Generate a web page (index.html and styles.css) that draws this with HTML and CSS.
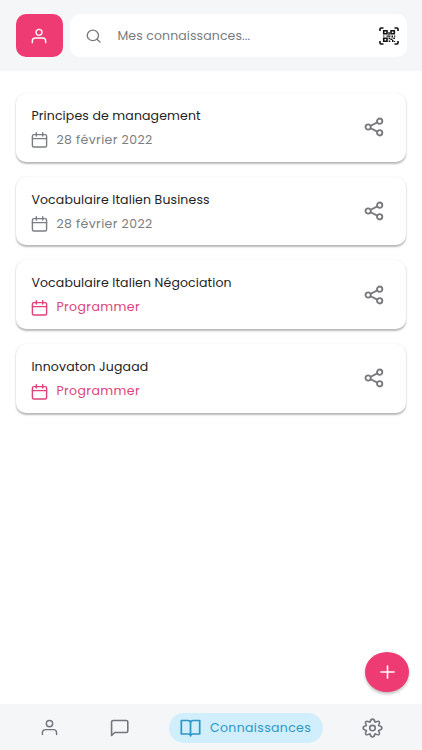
FILE: index.html
```
<!DOCTYPE html>
<html lang="fr">
<head>
<meta charset="utf-8">
<title>Connaissances</title>
<link rel="stylesheet" href="styles.css">
</head>
<body>
<svg class="defs" aria-hidden="true">
  <symbol id="user" viewBox="0 0 24 24" preserveAspectRatio="none"><circle cx="12" cy="6.5" r="4.5"/><path d="M2 22v-2.5a4.5 4.5 0 0 1 4.5-4.5h11a4.5 4.5 0 0 1 4.5 4.5V22"/></symbol>
  <symbol id="calendar" viewBox="0 0 24 24" preserveAspectRatio="none"><rect x="2" y="4" width="20" height="18.5" rx="2"/><path d="M2 10h20M7.500 1v5M16.500 1v5"/></symbol>
  <symbol id="share" viewBox="0 0 24 24" preserveAspectRatio="none"><circle cx="18.800" cy="5" r="3.200"/><circle cx="5" cy="12" r="3.200"/><circle cx="18.800" cy="19" r="3.200"/><path d="M8 10.500l8-4M8 13.500l8 4"/></symbol>
</svg>
<div class="app">
  <header class="top">
    <button class="profile" aria-label="Profil"><svg><use href="#user"/></svg></button>
    <div class="search">
      <svg class="loupe" viewBox="0 0 24 24" preserveAspectRatio="none"><circle cx="11" cy="11" r="9"/><path d="M17.500 17.500L22.500 22.500"/></svg>
      <span class="hint">Mes connaissances...</span>
      <svg class="qr" viewBox="0 0 20 18" preserveAspectRatio="none">
        <path class="frame" d="M1 4V2q0-1 1-1h2.500M15.500 1H18q1 0 1 1v2M1 14v2q0 1 1 1h2.500M15.500 17H18q1 0 1-1v-2"/>
        <path class="frame" d="M4.700 3.700h3.300v3h-3.300zM12 3.700h3.300v3H12zM4.700 11.300h3.300v3h-3.300z"/>
        <path class="dots" d="M9.400 5h1.300v3H9.400zM4 8.400h1.500v1.200H4zM7.500 8.500h4v1.200h-4zM12.500 8.500h1.500v2h-1.500zM15 8.400h1.300v1.300H15zM9.500 10.500h1.700v1.700H9.500zM14.300 10.500H16V12h-1.700zM11.500 11.500h2V13h-2zM9.700 13.500h1.600V15H9.700zM13 13h1.500v2H13zM15 14h1.200v1H15z"/>
      </svg>
    </div>
  </header>
  <main class="list">
    <article class="card"><div class="info"><h2>Principes de management</h2><p><svg><use href="#calendar"/></svg><span>28 février 2022</span></p></div><svg class="share"><use href="#share"/></svg></article>
    <article class="card"><div class="info"><h2>Vocabulaire Italien Business</h2><p><svg><use href="#calendar"/></svg><span>28 février 2022</span></p></div><svg class="share"><use href="#share"/></svg></article>
    <article class="card"><div class="info"><h2>Vocabulaire Italien Négociation</h2><p class="plan"><svg><use href="#calendar"/></svg><span>Programmer</span></p></div><svg class="share"><use href="#share"/></svg></article>
    <article class="card"><div class="info"><h2>Innovaton Jugaad</h2><p class="plan"><svg><use href="#calendar"/></svg><span>Programmer</span></p></div><svg class="share"><use href="#share"/></svg></article>
  </main>
  <nav class="bottom">
    <svg class="nav-user"><use href="#user"/></svg>
    <svg class="nav-chat" viewBox="0 0 24 24" preserveAspectRatio="none"><path d="M2 22V4a2 2 0 0 1 2-2h16.500a2 2 0 0 1 2 2v12a2 2 0 0 1-2 2H6z"/></svg>
    <a class="active"><svg viewBox="0 0 24 24" preserveAspectRatio="none"><path d="M1.500 2H9a3 3 0 0 1 3 3v17.500a2.500 2.500 0 0 0-2.500-2.500H1.500zM22.500 2H15a3 3 0 0 0-3 3v17.500a2.500 2.500 0 0 1 2.500-2.500h8z"/></svg><span>Connaissances</span></a>
    <svg class="nav-gear" viewBox="0 0 24 24" preserveAspectRatio="none"><circle cx="12" cy="12" r="3.200"/><path d="M9.300 4.500Q10 1.300 12 1.300T14.700 4.500Q15 5.500 16 4.700Q18.500 3.300 19.600 4.400T19.300 8Q18.500 9 19.500 9.300Q22.700 10 22.700 12T19.500 14.700Q18.500 15 19.300 16Q20.700 18.500 19.600 19.600T16 19.300Q15 18.500 14.700 19.500Q14 22.700 12 22.700T9.300 19.500Q9 18.500 8 19.300Q5.500 20.700 4.400 19.600T4.700 16Q5.500 15 4.500 14.700Q1.300 14 1.300 12T4.500 9.300Q5.500 9 4.700 8Q3.300 5.500 4.400 4.400T8 4.700Q9 5.500 9.300 4.500z"/></svg>
  </nav>
  <button class="add" aria-label="Ajouter"><svg viewBox="0 0 16 16" preserveAspectRatio="none"><path d="M8 1v14M1 8h14"/></svg></button>
</div>
</body>
</html>
```
FILE: styles.css
```
* { box-sizing: border-box; margin: 0; padding: 0; }
body { width: 422px; height: 750px; overflow: hidden; background: #fff; font-family: Poppins, Inter, sans-serif; }
button { border: 0; }
svg { display: block; flex: none; fill: none; stroke: currentColor; stroke-width: 2; stroke-linecap: round; stroke-linejoin: round; }
.defs { position: absolute; width: 0; height: 0; }
.app { position: relative; display: flex; flex-direction: column; height: 750px; }
.top { display: flex; gap: 7px; height: 71px; padding: 14px 15.500px; background: #f4f6f8; }
.profile { display: grid; place-items: center; width: 47px; height: 43px; border-radius: 10px; background: #ee3b74; color: #fff; }
.profile svg { width: 16px; height: 16px; margin-top: 1px; stroke-width: 2.100; }
.search { flex: 1; display: flex; align-items: center; padding: 0 8px 0 16px; border-radius: 10px; background: #fff; color: #777a7e; }
.loupe { width: 15px; height: 14px; stroke-width: 2.200; }
.hint { flex: 1; margin-left: 17px; padding-top: 1px; font-size: 12.500px; letter-spacing: .1px; }
.qr { width: 20px; height: 18px; color: #111; stroke-linecap: butt; stroke-linejoin: miter; }
.frame { stroke-width: 1.600; }
.dots { fill: #111; stroke: none; }
.list { flex: 1; display: flex; flex-direction: column; gap: 15px; padding: 22px 16px 0 15.600px; }
.card { display: flex; align-items: center; justify-content: space-between; height: 68.700px; padding: 0 22.500px 0 15.800px; border-radius: 10px; background: #fff; box-shadow: 0 1.500px 2px rgba(0,0,0,.28), 0 0 2px rgba(0,0,0,.04); }
.info { padding-top: 1.200px; }
h2 { color: #222; font-size: 12.500px; line-height: 18px; font-weight: 400; letter-spacing: .13px; white-space: nowrap; }
.card p { display: flex; align-items: center; gap: 8px; margin-top: 6px; height: 18px; color: #7b7e83; font-size: 12.500px; letter-spacing: .4px; }
.card p svg { width: 17px; height: 16px; margin-top: 1px; }
.card .plan { color: #db437a; }
.share { width: 20px; height: 20px; color: #77797c; stroke-width: 2.200; }
.bottom { display: flex; align-items: center; height: 46px; padding: 1px 39px 0 41px; background: #f4f6f8; color: #74767d; }
.nav-user { width: 17px; height: 17px; }
.nav-chat { width: 19px; height: 18px; margin-left: 52px; }
.active { display: flex; align-items: center; gap: 9px; width: 154px; height: 30px; margin-left: 40px; padding-left: 11px; border-radius: 15px; background: #d0eefb; color: #2b98c4; font-size: 12.500px; letter-spacing: .35px; }
.active svg { width: 21px; height: 18px; }
.nav-gear { width: 21px; height: 20px; margin-left: auto; stroke-width: 1.900; }
.add { position: absolute; right: 13px; bottom: 58px; display: grid; place-items: center; width: 44px; height: 40px; border-radius: 50%; background: #ee3b74; color: #fff; box-shadow: 0 2px 3px rgba(0,0,0,.25); }
.add svg { width: 15px; height: 14px; stroke-width: 1.700; }
```
